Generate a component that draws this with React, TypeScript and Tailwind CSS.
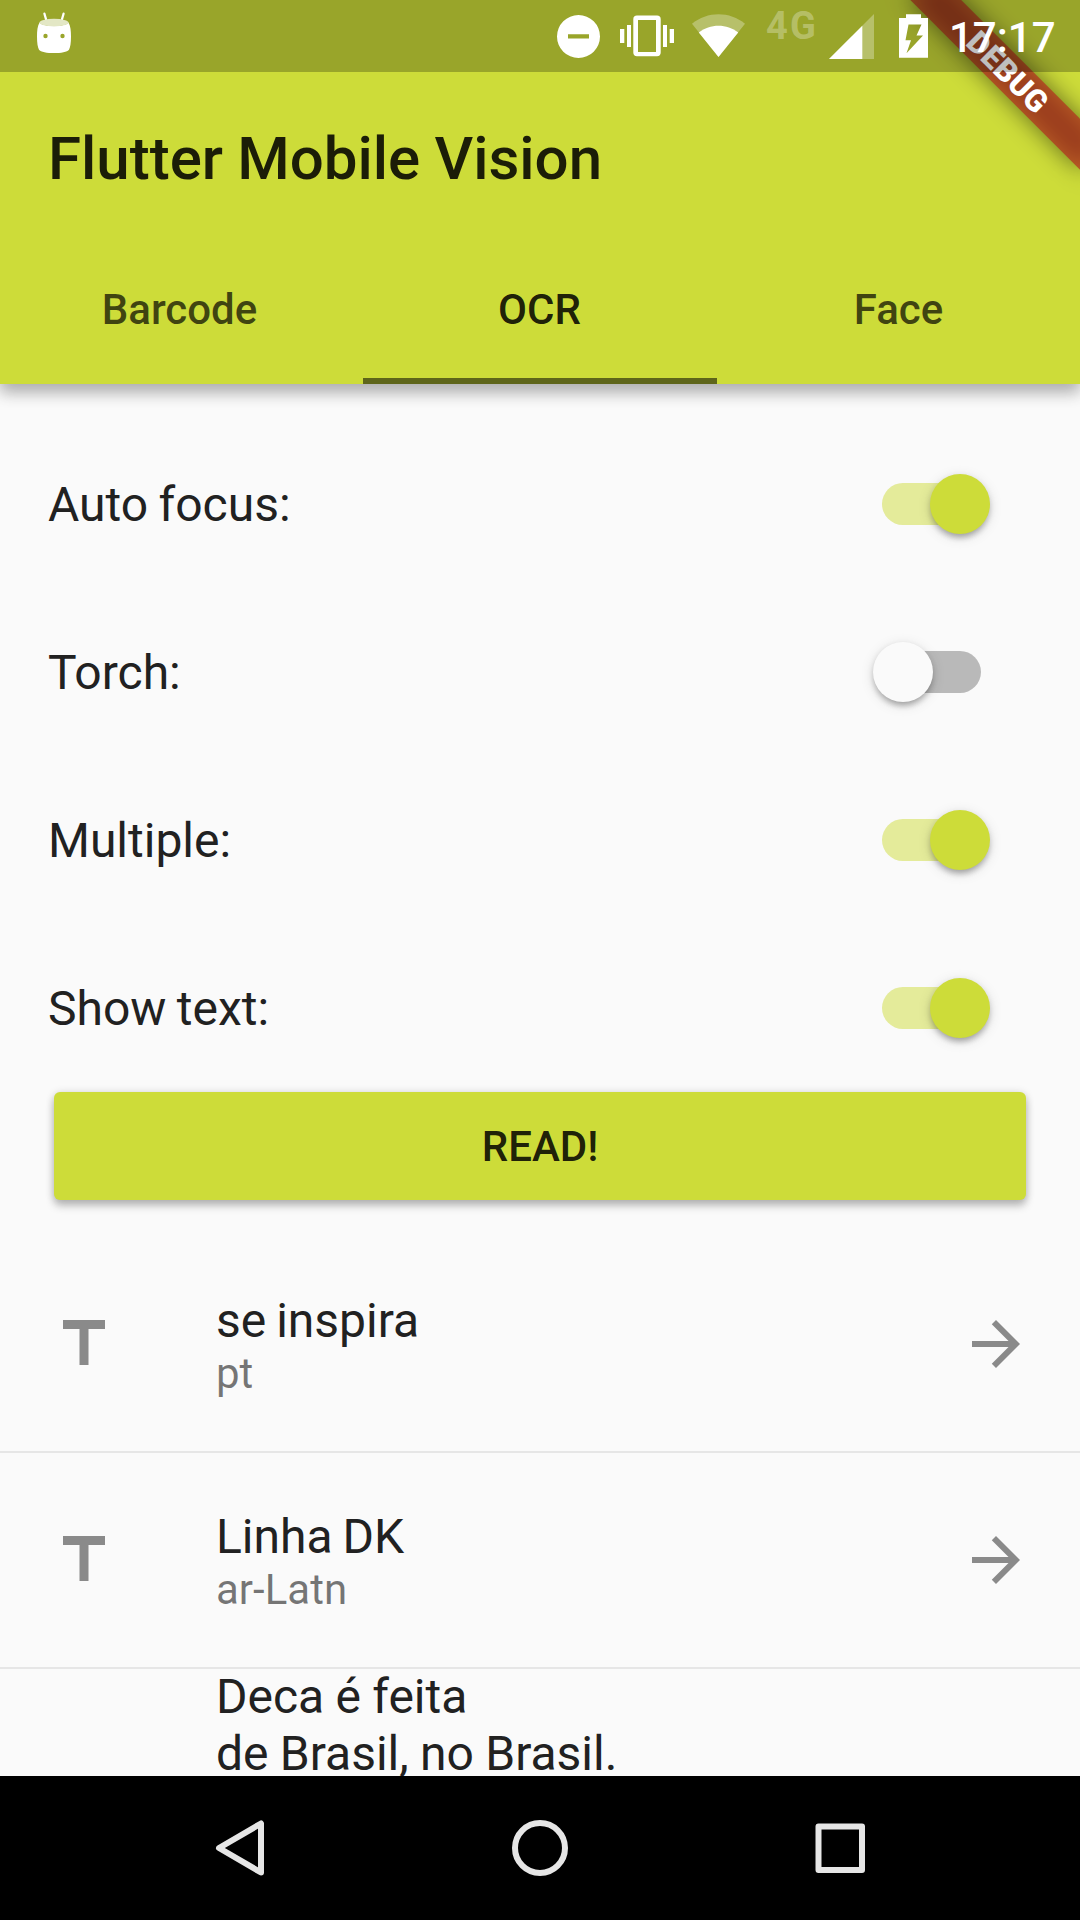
import React from "react";

function StatusBar() {
  return (
    <div className="absolute inset-x-0 top-0 z-20 flex h-[72px] items-start bg-black/25 text-white">
      <svg className="ml-9 h-[72px] w-9" viewBox="36 0 36 72" fill="none">
        <path d="M44.4 13.6l2.3 8M63.6 13.6l-2.3 8" stroke="#fff" strokeWidth="2.2" strokeLinecap="round" />
        <path
          d="M39.5 22.5C41 27 67 27 68.500 22.500C70.600 26 71 31 71 36.500C71 43 70.300 47.500 69 49.700C66 54.200 42 54.200 39 49.700C37.700 47.500 37 43 37 36.500C37 31 37.400 26 39.500 22.500Z"
          fill="#fff"
        />
        <ellipse cx="54" cy="22.600" rx="14.600" ry="3.800" fill="#e3e7c5" />
        <circle cx="45.500" cy="36" r="2.200" fill="#9aa52b" />
        <circle cx="62.500" cy="36" r="2.200" fill="#9aa52b" />
      </svg>
      <div className="grow" />
      <svg className="h-[72px] w-[48px]" viewBox="555 0 48 72" fill="#fff">
        <path fillRule="evenodd" d="M578.500 15a21.500 21.500 0 1 0 0 43a21.500 21.500 0 1 0 0-43ZM568 34.200h21v4.300h-21Z" />
      </svg>
      <svg className="ml-[13px] h-[72px] w-[62px]" viewBox="616 0 62 72" fill="#fff">
        <path
          fillRule="evenodd"
          d="M637 15.500h20a3.700 3.700 0 0 1 3.700 3.700v33.400a3.700 3.700 0 0 1-3.700 3.700h-20a3.700 3.700 0 0 1-3.700-3.700v-33.400a3.700 3.700 0 0 1 3.700-3.700ZM638 20v32h18v-32Z"
        />
        <path d="M627 25h4v22h-4ZM620 29h4.300v14h-4.300ZM663 25h4v22h-4ZM669.700 29h4.300v14h-4.300Z" />
      </svg>
      <svg className="ml-3 h-[72px] w-[58px]" viewBox="690 0 58 72" fill="#fff">
        <path d="M718.500 57L692 23.800C707 11 730 11 745 23.800Z" fillOpacity="0.3" />
        <path d="M718.500 57L698.800 32.400C710 23.400 727 23.400 738.200 32.400Z" />
      </svg>
      <span className="ml-[18px] mt-[4px] w-[56px] text-[38px] font-bold leading-[44px] tracking-[2.300px] text-white/30">
        4G
      </span>
      <svg className="ml-[3px] h-[72px] w-[54px]" viewBox="825 0 54 72" fill="#fff">
        <path d="M829 59L874 14V59Z" fillOpacity="0.3" />
        <path d="M829 59L862.300 25.700V59Z" />
      </svg>
      <svg className="ml-[17px] h-[72px] w-[36px]" viewBox="896 0 36 72" fill="#fff">
        <path
          fillRule="evenodd"
          d="M906 14.200h15v3.800h7v39.700h-29v-39.700h7ZM908.500 24.500L905.500 40.300H911L906.500 53.300L923 35.500H916.500L921.500 24.500Z"
        />
      </svg>
      <span className="ml-[17px] mr-6 mt-[13px] w-[107px] whitespace-nowrap text-[42px] font-medium leading-[50px]">
        17:17
      </span>
    </div>
  );
}

function DebugBanner() {
  return (
    <div className="pointer-events-none absolute right-0 top-0 z-10 h-[384px] w-[400px] overflow-hidden">
      <div className="absolute left-full top-0 h-0 w-0 origin-top-left rotate-45">
        <div className="absolute -left-[120px] top-[84px] h-9 w-60 bg-black/50 blur-[12px]" />
        <div className="absolute -left-[120px] top-[84px] flex h-9 w-60 items-center justify-center bg-[#b71c1c]/[0.627] text-[31px] font-black leading-none tracking-[0.300px] text-white">
          DEBUG
        </div>
      </div>
    </div>
  );
}

const tabs = ["Barcode", "OCR", "Face"];

function Header() {
  return (
    <header className="relative z-10 h-[384px] shrink-0 bg-[#cddc39] pt-[72px] text-black/87 shadow-[0_3px_20px_rgba(0,0,0,0.16),0_9px_14px_rgba(0,0,0,0.22)]">
      <StatusBar />
      <DebugBanner />
      <div className="flex h-[168px] items-center px-12">
        <h1 className="pt-[5px] text-[60px] font-medium leading-[70px] [word-spacing:-0.700px]">Flutter Mobile Vision</h1>
      </div>
      <nav className="flex h-[144px]">
        {tabs.map((t) => (
          <div
            key={t}
            className={
              t === "OCR"
                ? "relative flex flex-1 items-center justify-center text-[42px] font-medium"
                : "flex flex-1 items-center justify-center text-[42px] font-medium text-black/70"
            }
          >
            <span className={t === "Face" ? "-mt-1.5 pr-[3px]" : "-mt-1.5 pr-px"}>{t}</span>
            {t === "OCR" && <div className="absolute inset-x-[3px] bottom-0 h-[6px] bg-black/54" />}
          </div>
        ))}
      </nav>
    </header>
  );
}

function Switch({ on }: { on: boolean }) {
  return (
    <div className="relative flex h-[60px] w-[117px] items-center justify-center">
      <div className={on ? "h-[42px] w-[99px] rounded-full bg-[#cddc39]/50" : "h-[42px] w-[99px] rounded-full bg-black/26"} />
      <div
        className={
          on
            ? "absolute right-0 top-0 size-[60px] rounded-full bg-[#cddc39] shadow-[0_6px_6.500px_-3px_rgba(0,0,0,0.2),0_3px_6.500px_rgba(0,0,0,0.14),0_3px_13.400px_rgba(0,0,0,0.12)]"
            : "absolute left-0 top-0 size-[60px] rounded-full bg-[#fafafa] shadow-[0_6px_6.500px_-3px_rgba(0,0,0,0.2),0_3px_6.500px_rgba(0,0,0,0.14),0_3px_13.400px_rgba(0,0,0,0.12)]"
        }
      />
    </div>
  );
}

const settings = [
  { label: "Auto focus:", on: true },
  { label: "Torch:", on: false },
  { label: "Multiple:", on: true },
  { label: "Show text:", on: true },
];

const results = [
  { title: "se inspira", lang: "pt" },
  { title: "Linha DK", lang: "ar-Latn" },
];

export default function App() {
  return (
    <div className="flex h-[1920px] w-[1080px] flex-col overflow-hidden bg-[#fafafa] font-['Roboto',sans-serif] text-[#212121]">
      <Header />
      <main className="flex min-h-0 flex-1 flex-col overflow-hidden pt-9">
        {settings.map((s) => (
          <div key={s.label} className="flex h-[168px] shrink-0 items-center justify-between pl-12 pr-[90px]">
            <span className="pt-0.5 text-[48px] leading-[56px] [word-spacing:-1.500px]">{s.label}</span>
            <Switch on={s.on} />
          </div>
        ))}
        <button className="mx-[54px] mb-[37px] h-[108px] shrink-0 rounded-[6px] bg-[#cddc39] text-[42px] font-medium text-black/87 shadow-[0_1px_8px_rgba(0,0,0,0.16),0_6px_8px_rgba(0,0,0,0.22)]">
          READ!
        </button>
        {results.map((r) => (
          <div key={r.title} className="flex h-[216px] shrink-0 items-center border-b-2 border-black/8 pl-12 pr-12">
            <svg className="size-[72px]" viewBox="0 0 24 24" fill="#8a8a8a">
              <path d="M5 4v3h5.500v12h3V7H19V4z" />
            </svg>
            <div className="ml-24 flex grow flex-col pt-[3px]">
              <span className="text-[48px] leading-[56px] [word-spacing:-2px]">{r.title}</span>
              <span className="text-[42px] leading-[50px] text-black/54">{r.lang}</span>
            </div>
            <svg className="size-[72px]" viewBox="0 0 24 24" fill="#8a8a8a">
              <path d="M12 4l-1.410 1.410L16.170 11H4v2h12.170l-5.580 5.590L12 20l8-8z" />
            </svg>
          </div>
        ))}
        <div className="flex shrink-0 flex-col pl-[216px] text-[48px] leading-[56.500px] [word-spacing:-0.600px]">
          <span>Deca é feita</span>
          <span>de Brasil, no Brasil.</span>
        </div>
      </main>
      <footer className="flex h-36 shrink-0 items-center justify-between bg-black px-[204px]">
        <svg className="size-[72px]" viewBox="0 0 72 72" fill="none" stroke="#e6e6e6" strokeWidth="6" strokeLinejoin="round">
          <path d="M57 11.500V60.500L15 36Z" />
        </svg>
        <svg className="size-[72px]" viewBox="0 0 72 72" fill="none" stroke="#e6e6e6" strokeWidth="6">
          <circle cx="36" cy="36" r="25" />
        </svg>
        <svg className="size-[72px]" viewBox="0 0 72 72" fill="none" stroke="#e6e6e6" strokeWidth="6" strokeLinejoin="round">
          <path d="M14.500 14.500h43.500v43.500h-43.500Z" />
        </svg>
      </footer>
    </div>
  );
}
